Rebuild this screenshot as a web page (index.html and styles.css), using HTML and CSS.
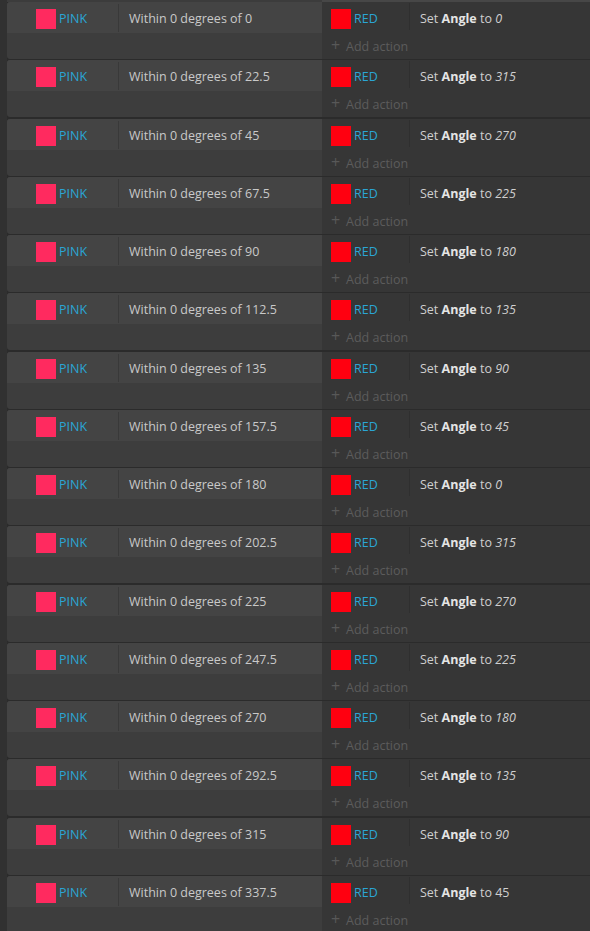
FILE: index.html
```html
<!DOCTYPE html>
<html lang="en">
<head>
<meta charset="UTF-8" />
<meta name="viewport" content="width=device-width, initial-scale=1" />
<title>Event sheet</title>
<link rel="stylesheet" href="styles.css">
</head>
<body>

<div class="sheet">
  <div class="edge"><span class="edge-cond"></span><span class="edge-act"></span></div>
  <div class="events">

    <div class="event">
      <div class="conds"><div class="cond"><div class="obj"><span class="swatch pink"></span>PINK</div><div class="cond-text">Within 0 degrees of 0</div></div></div>
      <div class="acts"><div class="act"><div class="obj"><span class="swatch red"></span>RED</div><div class="act-text">Set <b>Angle</b> to <i>0</i></div></div><div class="add"><span class="plus">+</span>Add action</div></div>
    </div>

    <div class="event">
      <div class="conds"><div class="cond"><div class="obj"><span class="swatch pink"></span>PINK</div><div class="cond-text">Within 0 degrees of 22.5</div></div></div>
      <div class="acts"><div class="act"><div class="obj"><span class="swatch red"></span>RED</div><div class="act-text">Set <b>Angle</b> to <i>315</i></div></div><div class="add"><span class="plus">+</span>Add action</div></div>
    </div>

    <div class="event">
      <div class="conds"><div class="cond"><div class="obj"><span class="swatch pink"></span>PINK</div><div class="cond-text">Within 0 degrees of 45</div></div></div>
      <div class="acts"><div class="act"><div class="obj"><span class="swatch red"></span>RED</div><div class="act-text">Set <b>Angle</b> to <i>270</i></div></div><div class="add"><span class="plus">+</span>Add action</div></div>
    </div>

    <div class="event">
      <div class="conds"><div class="cond"><div class="obj"><span class="swatch pink"></span>PINK</div><div class="cond-text">Within 0 degrees of 67.5</div></div></div>
      <div class="acts"><div class="act"><div class="obj"><span class="swatch red"></span>RED</div><div class="act-text">Set <b>Angle</b> to <i>225</i></div></div><div class="add"><span class="plus">+</span>Add action</div></div>
    </div>

    <div class="event">
      <div class="conds"><div class="cond"><div class="obj"><span class="swatch pink"></span>PINK</div><div class="cond-text">Within 0 degrees of 90</div></div></div>
      <div class="acts"><div class="act"><div class="obj"><span class="swatch red"></span>RED</div><div class="act-text">Set <b>Angle</b> to <i>180</i></div></div><div class="add"><span class="plus">+</span>Add action</div></div>
    </div>

    <div class="event">
      <div class="conds"><div class="cond"><div class="obj"><span class="swatch pink"></span>PINK</div><div class="cond-text">Within 0 degrees of 112.5</div></div></div>
      <div class="acts"><div class="act"><div class="obj"><span class="swatch red"></span>RED</div><div class="act-text">Set <b>Angle</b> to <i>135</i></div></div><div class="add"><span class="plus">+</span>Add action</div></div>
    </div>

    <div class="event">
      <div class="conds"><div class="cond"><div class="obj"><span class="swatch pink"></span>PINK</div><div class="cond-text">Within 0 degrees of 135</div></div></div>
      <div class="acts"><div class="act"><div class="obj"><span class="swatch red"></span>RED</div><div class="act-text">Set <b>Angle</b> to <i>90</i></div></div><div class="add"><span class="plus">+</span>Add action</div></div>
    </div>

    <div class="event">
      <div class="conds"><div class="cond"><div class="obj"><span class="swatch pink"></span>PINK</div><div class="cond-text">Within 0 degrees of 157.5</div></div></div>
      <div class="acts"><div class="act"><div class="obj"><span class="swatch red"></span>RED</div><div class="act-text">Set <b>Angle</b> to <i>45</i></div></div><div class="add"><span class="plus">+</span>Add action</div></div>
    </div>

    <div class="event">
      <div class="conds"><div class="cond"><div class="obj"><span class="swatch pink"></span>PINK</div><div class="cond-text">Within 0 degrees of 180</div></div></div>
      <div class="acts"><div class="act"><div class="obj"><span class="swatch red"></span>RED</div><div class="act-text">Set <b>Angle</b> to <i>0</i></div></div><div class="add"><span class="plus">+</span>Add action</div></div>
    </div>

    <div class="event">
      <div class="conds"><div class="cond"><div class="obj"><span class="swatch pink"></span>PINK</div><div class="cond-text">Within 0 degrees of 202.5</div></div></div>
      <div class="acts"><div class="act"><div class="obj"><span class="swatch red"></span>RED</div><div class="act-text">Set <b>Angle</b> to <i>315</i></div></div><div class="add"><span class="plus">+</span>Add action</div></div>
    </div>

    <div class="event">
      <div class="conds"><div class="cond"><div class="obj"><span class="swatch pink"></span>PINK</div><div class="cond-text">Within 0 degrees of 225</div></div></div>
      <div class="acts"><div class="act"><div class="obj"><span class="swatch red"></span>RED</div><div class="act-text">Set <b>Angle</b> to <i>270</i></div></div><div class="add"><span class="plus">+</span>Add action</div></div>
    </div>

    <div class="event">
      <div class="conds"><div class="cond"><div class="obj"><span class="swatch pink"></span>PINK</div><div class="cond-text">Within 0 degrees of 247.5</div></div></div>
      <div class="acts"><div class="act"><div class="obj"><span class="swatch red"></span>RED</div><div class="act-text">Set <b>Angle</b> to <i>225</i></div></div><div class="add"><span class="plus">+</span>Add action</div></div>
    </div>

    <div class="event">
      <div class="conds"><div class="cond"><div class="obj"><span class="swatch pink"></span>PINK</div><div class="cond-text">Within 0 degrees of 270</div></div></div>
      <div class="acts"><div class="act"><div class="obj"><span class="swatch red"></span>RED</div><div class="act-text">Set <b>Angle</b> to <i>180</i></div></div><div class="add"><span class="plus">+</span>Add action</div></div>
    </div>

    <div class="event">
      <div class="conds"><div class="cond"><div class="obj"><span class="swatch pink"></span>PINK</div><div class="cond-text">Within 0 degrees of 292.5</div></div></div>
      <div class="acts"><div class="act"><div class="obj"><span class="swatch red"></span>RED</div><div class="act-text">Set <b>Angle</b> to <i>135</i></div></div><div class="add"><span class="plus">+</span>Add action</div></div>
    </div>

    <div class="event">
      <div class="conds"><div class="cond"><div class="obj"><span class="swatch pink"></span>PINK</div><div class="cond-text">Within 0 degrees of 315</div></div></div>
      <div class="acts"><div class="act"><div class="obj"><span class="swatch red"></span>RED</div><div class="act-text">Set <b>Angle</b> to <i>90</i></div></div><div class="add"><span class="plus">+</span>Add action</div></div>
    </div>

    <div class="event">
      <div class="conds"><div class="cond"><div class="obj"><span class="swatch pink"></span>PINK</div><div class="cond-text">Within 0 degrees of 337.5</div></div></div>
      <div class="acts"><div class="act"><div class="obj"><span class="swatch red"></span>RED</div><div class="act-text">Set <b>Angle</b> to 45</div></div><div class="add"><span class="plus">+</span>Add action</div></div>
    </div>

  </div>
</div>

</body>
</html>
```

FILE: styles.css
```css
body {
  margin: 0;
  background: #313131;
  font-family: 'Open Sans', 'Noto Sans', sans-serif;
  font-size: 12.5px;
  color: #c9c9c9;
  overflow: hidden;
}
.sheet {
  padding-left: 7px;
}
.edge {
  display: flex;
  height: 2px;
}
.edge-cond {
  width: 315px;
  background: #3c3c3c;
}
.edge-act {
  flex: 1;
  background: #474747;
}
.events {
  display: flex;
  flex-direction: column;
  gap: 3px;
  background: #2b2b2b;
}
.event {
  display: grid;
  grid-template-columns: 315px 1fr;
  height: 55.25px;
}
.conds {
  background: #3d3d3d;
  border-radius: 3px 0 0 3px;
  overflow: hidden;
}
.cond {
  display: grid;
  grid-template-columns: 112px 1fr;
  height: 31px;
  background: #444444;
}
.obj {
  display: flex;
  align-items: flex-start;
  line-height: 20px;
  color: #2aa6d4;
  border-right: 1px solid #393939;
  margin: 2px 0 1px;
  padding-top: 5px;
}
.cond .obj {
  padding-left: 29px;
}
.swatch {
  width: 20px;
  height: 20px;
  margin-right: 3px;
}
.pink {
  background: #ff2a5f;
}
.red {
  background: #ff0010;
}
.cond-text {
  padding: 7px 0 0 10px;
  line-height: 20px;
}
.acts {
  background: #363636;
}
.act {
  display: grid;
  grid-template-columns: 88px 1fr;
  height: 28px;
}
.act .obj {
  padding-left: 9px;
  margin: 1px 0 0;
  padding-top: 6px;
  border-right-color: #2f2f2f;
}
.act-text {
  padding: 7px 0 0 10px;
  line-height: 20px;
  color: #cfcfcf;
}
.act-text b {
  color: #e4e4e4;
}
.add {
  padding: 3px 0 0 9px;
  line-height: 24px;
  color: #5c5c5c;
}
.plus {
  display: inline-block;
  width: 15px;
  font-size: 16px;
  color: #585858;
}
```
